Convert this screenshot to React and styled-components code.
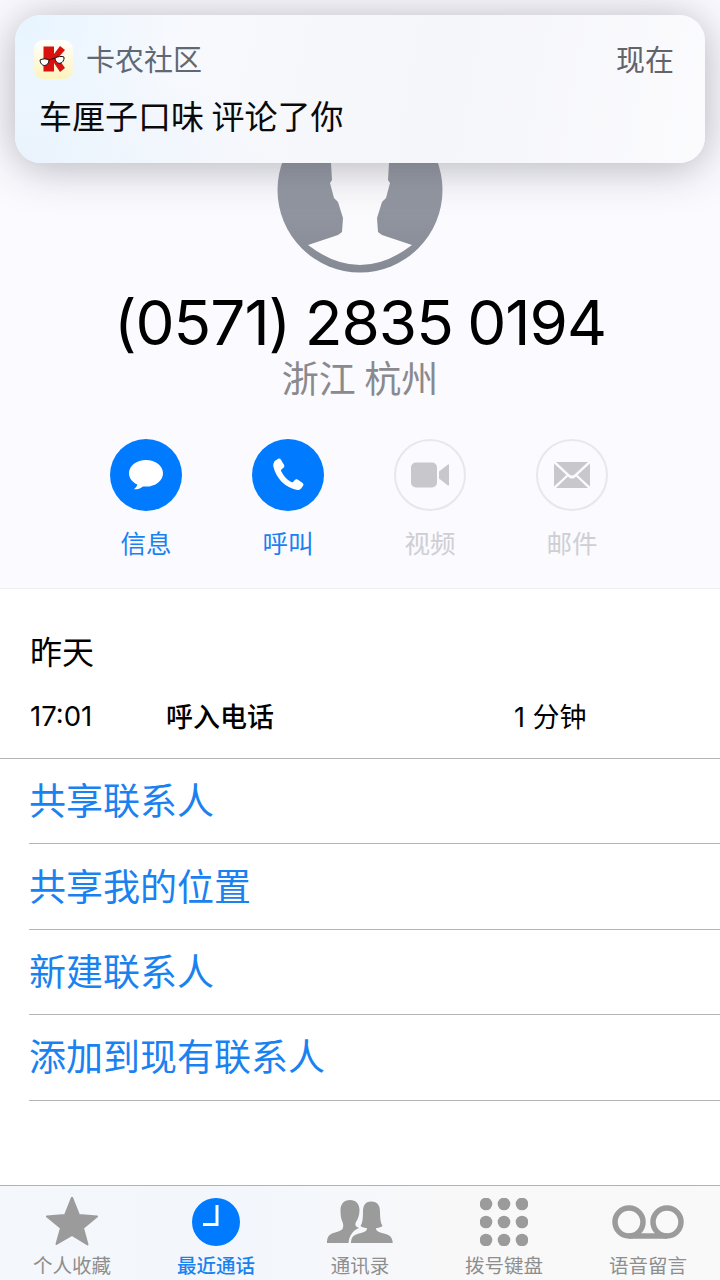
import React from "react";
import styled, { createGlobalStyle } from "styled-components";

const CJK = `"Noto Sans CJK SC", "Noto Sans", sans-serif`;
const BLUE = "#007aff";

const GlobalStyle = createGlobalStyle`
  html, body {
    margin: 0;
    padding: 0;
    background: #fff;
    font-family: "Inter", "Liberation Sans", ${CJK};
  }
  * { box-sizing: border-box; }
`;

const Page = styled.div`
  position: relative;
  width: 720px;
  height: 1280px;
  overflow: hidden;
  display: flex;
  flex-direction: column;
  background: #fff;
`;

const Header = styled.section`
  height: 589px;
  background: #fafaff;
  border-bottom: 1px solid #eeeef2;
  display: flex;
  flex-direction: column;
  align-items: center;
  padding-top: 107px;
`;

const Avatar = styled.svg`
  width: 166px;
  height: 166px;
  display: block;
`;

const Phone = styled.div`
  margin-top: 18px;
  font-size: 62px;
  line-height: 64px;
  color: #000;
  letter-spacing: -1px;
  word-spacing: -2px;
  font-family: "Inter", sans-serif;
`;

const Region = styled.div`
  font-size: 37px;
  line-height: 44px;
  color: #8a8a8e;
  font-family: ${CJK};
`;

const Actions = styled.div`
  margin-top: 40px;
  margin-right: 2px;
  display: flex;
  gap: 70px;
`;

const Action = styled.div`
  width: 72px;
  display: flex;
  flex-direction: column;
  align-items: center;
`;

const ActionCircle = styled.div`
  width: 72px;
  height: 72px;
  border-radius: 50%;
  display: flex;
  align-items: center;
  justify-content: center;
  background: ${(p) => (p.$on ? BLUE : "transparent")};
  border: ${(p) => (p.$on ? "none" : "2px solid #e8e8ec")};
`;

const ActionLabel = styled.div`
  margin-top: 13px;
  font-size: 25.5px;
  line-height: 36px;
  white-space: nowrap;
  font-family: ${CJK};
  color: ${(p) => (p.$on ? "#1a82f0" : "#cfcfd3")};
`;

const Recent = styled.section`
  padding: 38px 0 0 30px;
`;

const DayTitle = styled.div`
  font-size: 32px;
  line-height: 46px;
  color: #000;
  font-family: ${CJK};
`;

const CallRow = styled.div`
  display: flex;
  align-items: center;
  height: 40px;
  margin-top: 22px;
  font-size: 27px;
  color: #000;
`;

const CallTime = styled.div`
  width: 136px;
  padding-top: 2px;
  font-size: 27.5px;
  font-family: "Inter", sans-serif;
`;

const CallType = styled.div`
  width: 348px;
  font-weight: 500;
  font-family: ${CJK};
  font-size: 27px;
`;

const CallLength = styled.div`
  font-family: "Inter", ${CJK};
`;

const LinkList = styled.div`
  margin-top: 23px;
  border-top: 1px solid #b5b5b9;
`;

const LinkRow = styled.div`
  margin-left: 29px;
  height: 85.4px;
  border-bottom: 1px solid #b5b5b9;
  display: flex;
  align-items: center;
  padding-bottom: 4px;
  font-size: 37px;
  color: #1a82f0;
  font-family: ${CJK};
`;

const Notice = styled.div`
  position: absolute;
  left: 15px;
  top: 15px;
  width: 690px;
  height: 148px;
  border-radius: 26px;
  background:
    radial-gradient(circle at 0 0, #e6f4ff, rgba(230, 244, 255, 0) 170px),
    radial-gradient(ellipse 260px 120px at 0 100%, #eaf3fd, rgba(234, 243, 253, 0)),
    linear-gradient(100deg, #f9fbff 0%, #f5f6fa 62%, #fbfbfe 100%);
  box-shadow: 0 4px 44px rgba(40, 40, 50, 0.34);
  padding: 25px 31px 0 19px;
`;

const NoticeTop = styled.div`
  display: flex;
  align-items: center;
`;

const AppIcon = styled.svg`
  width: 39px;
  height: 39px;
  display: block;
`;

const AppName = styled.div`
  margin-left: 13px;
  padding-bottom: 2px;
  font-size: 29px;
  line-height: 37px;
  color: #5f6875;
  font-family: ${CJK};
  flex: 1;
`;

const NoticeTime = styled.div`
  padding-bottom: 2px;
  font-size: 29px;
  line-height: 37px;
  color: #63636a;
  font-family: ${CJK};
`;

const NoticeBody = styled.div`
  margin: 14px 0 0 5px;
  font-size: 33px;
  line-height: 44px;
  color: #0a0a0a;
  font-family: ${CJK};
`;

const TabBar = styled.nav`
  position: absolute;
  left: 0;
  right: 0;
  bottom: 0;
  height: 95px;
  background: linear-gradient(90deg, #f4f7fb 0%, #f3f7fd 35%, #f8f8f9 60%, #f9f9f9 100%);
  border-top: 1px solid #b2b2b2;
  display: flex;
`;

const Tab = styled.div`
  width: 144px;
  height: 100%;
  display: flex;
  flex-direction: column;
  align-items: center;
`;

const TabIcon = styled.div`
  height: 66px;
  padding-top: 5px;
  display: flex;
  align-items: center;
  justify-content: center;
`;

const TabLabel = styled.div`
  font-size: 19.5px;
  line-height: 26px;
  white-space: nowrap;
  font-family: ${CJK};
  font-weight: ${(p) => (p.$on ? 500 : 400)};
  color: ${(p) => (p.$on ? "#1a82f0" : "#8e8e8e")};
`;

const actions = [
  {
    label: "信息",
    on: true,
    icon: (
      <svg width="36" height="32" viewBox="0 0 36 32">
        <path fill="#fff" d="M18 1C8.600 1 1 6.900 1 14.200c0 4.900 3.400 9.100 8.400 11.400-.6 1.900-2.200 3.600-3.400 4.700 3 .2 6.500-.9 9-2.900 1 .1 2 .2 3 .2 9.400 0 17-5.900 17-13.400S27.400 1 18 1z" />
      </svg>
    ),
  },
  {
    label: "呼叫",
    on: true,
    icon: (
      <svg width="34" height="34" viewBox="0 0 34 34">
        <path fill="#fff" d="M4.400 2.600 7 .9c1-.6 2.200-.3 2.800.7l3.300 5.500c.5.9.3 2-.5 2.600l-2 1.600c-.6.5-.7 1.200-.4 1.900 2.300 4.800 5.500 8.200 10 10.900.7.400 1.500.3 2-.3l1.700-1.900c.7-.8 1.800-.9 2.700-.3l5 3.400c.9.600 1.100 1.800.5 2.700l-1.800 2.500c-1 1.300-2.600 2-4.200 1.700C14.500 30 5 20.600 2.300 8.300 2 6.200 2.800 3.800 4.400 2.600z" />
      </svg>
    ),
  },
  {
    label: "视频",
    icon: (
      <svg width="38" height="26" viewBox="0 0 38 26">
        <rect x="0" y="0.500" width="26" height="25" rx="5" fill="#c8c8cc" />
        <path fill="#c8c8cc" d="M28 9.500 37 2.500c.4-.3 1-.1 1 .5v20c0 .6-.6.8-1 .5l-9-7z" />
      </svg>
    ),
  },
  {
    label: "邮件",
    icon: (
      <svg width="36" height="26" viewBox="0 0 36 26">
        <path fill="#c8c8cc" d="M0 1.500 12.500 13 0 24.500zM36 1.500 23.500 13 36 24.500zM2 0h32L20.500 12.500c-1.500 1.300-3.500 1.300-5 0zM2 26l12-11.500 1 .9c1.800 1.600 4.200 1.600 6 0l1-.9L34 26z" />
      </svg>
    ),
  },
];

const links = ["共享联系人", "共享我的位置", "新建联系人", "添加到现有联系人"];

const tabs = [
  {
    label: "个人收藏",
    icon: (
      <svg width="54" height="50" viewBox="0 1.500 54 50">
        <path fill="#9b9b9b" stroke="#9b9b9b" strokeWidth="2" strokeLinejoin="round" d="M27 2l7 17.500 18 1.500-14 11.500 4.500 16.500L27 39.500 11.500 48.500 16 32.500 2 21l18-1.500z" />
      </svg>
    ),
  },
  {
    label: "最近通话",
    on: true,
    icon: (
      <svg width="48" height="48" viewBox="0 0 48 48">
        <circle cx="24" cy="24" r="24" fill={BLUE} />
        <path fill="none" stroke="#fff" strokeWidth="3" d="M25 7v19.500H11" />
      </svg>
    ),
  },
  {
    label: "通讯录",
    icon: (
      <svg width="66" height="43" viewBox="0 0 66 43">
        <path fill="#9b9b9b" d="M23 0C29 0 32.500 4 32.500 10C32.500 15 31 19 29 22C28 24 28 26 30 27L32 28C26 30 22 36 21.500 43L0 43C0 38 1.500 35 5 33.500C9 32 14 31 15.500 29C16.500 27 16.500 24 15.500 22C14 19 13.500 15 13.500 10C13.500 4 17 0 23 0z" />
        <path fill="#9b9b9b" d="M44 1.500C51 1.500 53 6 53 12C53 18 53.500 23 55.500 26C53.500 27.500 51 28 49 28C49 30 50 31 52 32C56 33.500 60 34 63 36C65 38 65.700 41 65.700 43L24 43C24 40 24.500 38 26.500 36C29 34 33 33.500 37 32C39 31 40 30 40 28C38 28 35.500 27.500 33.500 26C35.500 23 36 18 36 12C36 6 38 1.500 44 1.500z" />
      </svg>
    ),
  },
  {
    label: "拨号键盘",
    icon: (
      <svg width="48" height="48" viewBox="0 0 48 48">
        {[6, 24, 42].map((cy) =>
          [6, 24, 42].map((cx) => (
            <circle key={`${cx}-${cy}`} cx={cx} cy={cy} r="6.300" fill="#9b9b9b" />
          ))
        )}
      </svg>
    ),
  },
  {
    label: "语音留言",
    icon: (
      <svg width="72" height="34" viewBox="0 0 72 34">
        <circle cx="17" cy="17" r="14" fill="none" stroke="#9b9b9b" strokeWidth="5.500" />
        <circle cx="55" cy="17" r="14" fill="none" stroke="#9b9b9b" strokeWidth="5.500" />
        <path stroke="#9b9b9b" strokeWidth="5.500" d="M17 31h38" />
      </svg>
    ),
  },
];

export default function App() {
  return (
    <Page>
      <GlobalStyle />
      <Header>
        <Avatar viewBox="0 0 166 166">
          <defs>
            <linearGradient id="avatarFill" x1="0" y1="0" x2="0" y2="1">
              <stop offset="0" stopColor="#a3a7b2" />
              <stop offset="1" stopColor="#868a94" />
            </linearGradient>
          </defs>
          <circle cx="83" cy="83" r="82.500" fill="url(#avatarFill)" />
          <path fill="#fbfbfe" d="M54 40L54 56L55 73L53 76L57 91L61 95L66 111L65 125L61 128L31 138Q83 178 135 138L105 128L101 125L100 111L105 95L109 91L113 76L111 73L112 56L112 40z" />
        </Avatar>
        <Phone>(0571) 2835 0194</Phone>
        <Region>浙江 杭州</Region>
        <Actions>
          {actions.map((a) => (
            <Action key={a.label}>
              <ActionCircle $on={a.on}>{a.icon}</ActionCircle>
              <ActionLabel $on={a.on}>{a.label}</ActionLabel>
            </Action>
          ))}
        </Actions>
      </Header>

      <Recent>
        <DayTitle>昨天</DayTitle>
        <CallRow>
          <CallTime>17:01</CallTime>
          <CallType>呼入电话</CallType>
          <CallLength>1 分钟</CallLength>
        </CallRow>
      </Recent>

      <LinkList>
        {links.map((t) => (
          <LinkRow key={t}>{t}</LinkRow>
        ))}
      </LinkList>

      <Notice>
        <NoticeTop>
          <AppIcon viewBox="0 0 39 39">
            <defs>
              <linearGradient id="iconBg" x1="0" y1="0" x2="0" y2="1">
                <stop offset="0" stopColor="#ffffff" />
                <stop offset="1" stopColor="#fdf3bd" />
              </linearGradient>
            </defs>
            <rect width="39" height="39" rx="9" fill="url(#iconBg)" />
            <path fill="#d8130f" d="M9.500 6.500H20V31.500H9.500zM20 14L26 6L31 10L24 18L31 28L26 32L20 23z" />
            <path fill="#fff" stroke="#111" strokeWidth="1" d="M6 20c2-1.500 7-1.500 9 0c0 3-2 5.500-4.500 5.500S6 23 6 20zM21 18c2-1.500 7-2 9-1c.5 3-1.500 6-4 6.300S21 21 21 18z" />
            <path fill="none" stroke="#111" strokeWidth="1" d="M15 20L21 18" />
          </AppIcon>
          <AppName>卡农社区</AppName>
          <NoticeTime>现在</NoticeTime>
        </NoticeTop>
        <NoticeBody>车厘子口味 评论了你</NoticeBody>
      </Notice>

      <TabBar>
        {tabs.map((t) => (
          <Tab key={t.label}>
            <TabIcon>{t.icon}</TabIcon>
            <TabLabel $on={t.on}>{t.label}</TabLabel>
          </Tab>
        ))}
      </TabBar>
    </Page>
  );
}
